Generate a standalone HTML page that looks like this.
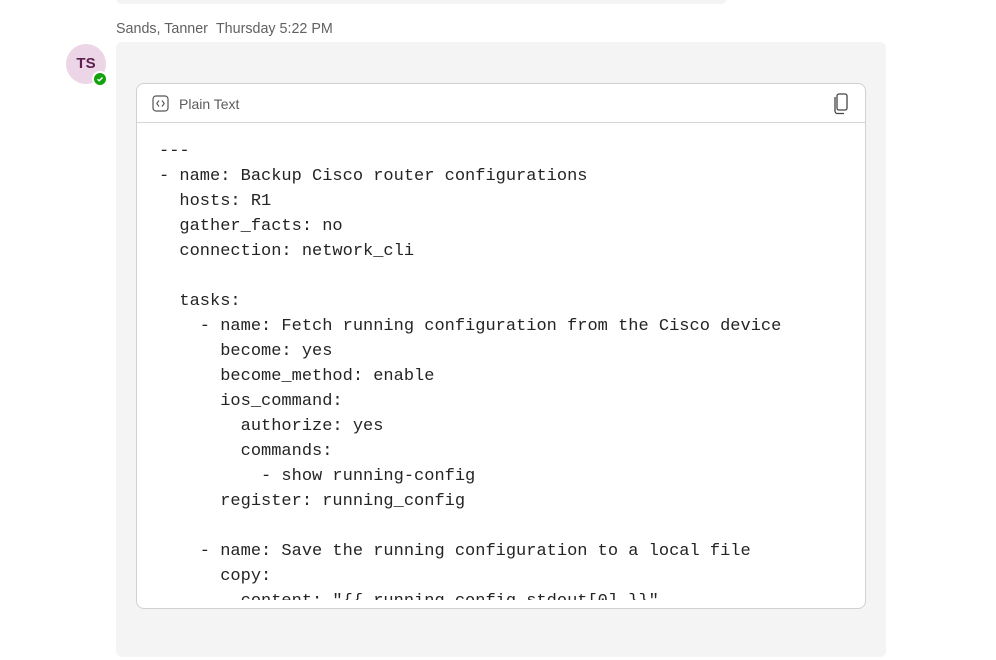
<!DOCTYPE html>
<html><head><meta charset="utf-8"><style>
body{margin:0;width:996px;height:660px;background:#fff;position:relative;overflow:hidden;font-family:"Liberation Sans",sans-serif;}
.top{position:absolute;left:116px;top:-10px;width:611px;height:14px;background:#f4f4f4;border-radius:6px;}
.meta{position:absolute;left:116px;top:21px;font-size:14.3px;color:#616161;}
.meta span{margin-left:8px;}
.av{position:absolute;left:66px;top:44px;width:40px;height:40px;border-radius:50%;background:#ebd5e6;color:#5b2050;font-weight:bold;font-size:15px;text-align:center;line-height:40px;}
.st{position:absolute;left:92px;top:71px;width:12px;height:12px;border-radius:50%;background:#13a10e;border:2px solid #fff;}
.bub{position:absolute;left:116px;top:42px;width:770px;height:615px;background:#f4f4f4;border-radius:6px;}
.box{position:absolute;left:136px;top:83px;width:728px;height:524px;background:#fff;border:1px solid #d1d1d1;border-radius:8px;overflow:hidden;}
.hd{height:38px;border-bottom:1px solid #d6d6d6;position:relative;}
.hd .t{position:absolute;left:42px;top:12px;font-size:14px;color:#5c5c5c;}
.clip{position:absolute;left:0;top:0;width:728px;height:516px;overflow:hidden;}
pre{margin:0;position:absolute;left:22px;top:55px;font-family:"Liberation Mono",monospace;font-size:17px;line-height:25px;color:#242424;}
</style></head><body>
<div class="top"></div>
<div class="meta">Sands, Tanner<span>Thursday 5:22 PM</span></div>
<div class="av">TS</div>
<div class="st"><svg width="12" height="12" viewBox="0 0 12 12" style="position:absolute;left:0;top:0"><path d="M3.5 6.2l1.7 1.6 3.3-3.3" stroke="#fff" stroke-width="1.4" fill="none"/></svg></div>
<div class="bub"></div>
<div class="box">
<div class="hd">
<svg style="position:absolute;left:15px;top:11px" width="17" height="17" viewBox="0 0 17 17"><rect x="1" y="1" width="15" height="15" rx="3" fill="none" stroke="#555" stroke-width="1.2"/><path d="M7 5.5L4.8 8.5 7 11.5M10 5.5l2.2 3L10 11.5" fill="none" stroke="#555" stroke-width="1.1"/></svg>
<span class="t">Plain Text</span>
<svg style="position:absolute;left:696px;top:9px" width="16" height="22" viewBox="0 0 16 22"><rect x="4" y="1" width="10" height="16" rx="2" fill="none" stroke="#444" stroke-width="1.3"/><path d="M2 4v14a2.5 2.5 0 0 0 2.5 2.5H11" fill="none" stroke="#444" stroke-width="1.3"/></svg>
</div>
<div class="clip">
<pre>---
- name: Backup Cisco router configurations
  hosts: R1
  gather_facts: no
  connection: network_cli

  tasks:
    - name: Fetch running configuration from the Cisco device
      become: yes
      become_method: enable
      ios_command:
        authorize: yes
        commands:
          - show running-config
      register: running_config

    - name: Save the running configuration to a local file
      copy:
        content: "{{ running_config.stdout[0] }}"</pre>
</div>
</div>
</body></html>
